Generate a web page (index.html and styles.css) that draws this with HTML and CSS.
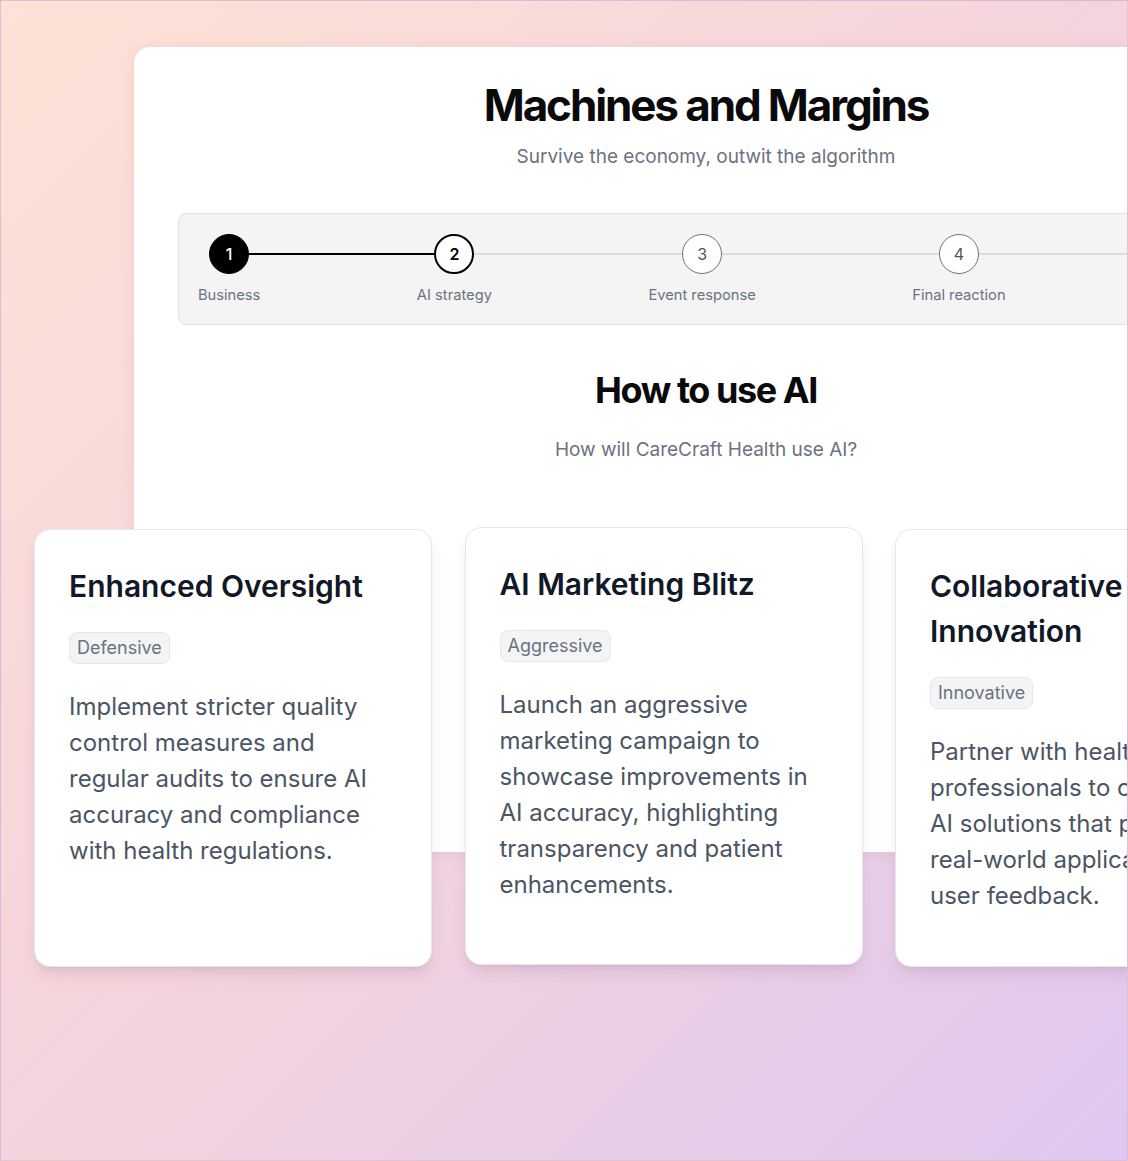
FILE: index.html
```html
<!DOCTYPE html>
<html lang="en">
<head>
<meta charset="utf-8">
<title>Machines and Margins</title>
<link rel="stylesheet" href="styles.css">
</head>
<body>
<div class="page">
  <main class="panel">
    <header class="hero">
      <h1 class="hero-title">Machines and Margins</h1>
      <p class="hero-sub">Survive the economy, outwit the algorithm</p>
    </header>

    <nav class="stepper" aria-label="Progress">
      <div class="track"><div class="progress" style="width:225px"></div></div>
      <ol class="steps">
        <li class="step done"><span class="dot">1</span><span class="step-label">Business</span></li>
        <li class="step current"><span class="dot">2</span><span class="step-label">AI strategy</span></li>
        <li class="step"><span class="dot">3</span><span class="step-label">Event response</span></li>
        <li class="step"><span class="dot">4</span><span class="step-label">Final reaction</span></li>
        <li class="step"><span class="dot">5</span><span class="step-label">Results</span></li>
      </ol>
    </nav>

    <section class="question">
      <h2 class="question-title">How to use AI</h2>
      <p class="question-sub">How will CareCraft Health use AI?</p>
    </section>
  </main>

  <div class="cards">
    <article class="card">
      <h3 class="card-title">Enhanced Oversight</h3>
      <span class="badge">Defensive</span>
      <p class="card-text">Implement stricter quality control measures and regular audits to ensure AI accuracy and compliance with health regulations.</p>
    </article>
    <article class="card raised">
      <h3 class="card-title">AI Marketing Blitz</h3>
      <span class="badge">Aggressive</span>
      <p class="card-text">Launch an aggressive marketing campaign to showcase improvements in AI accuracy, highlighting transparency and patient enhancements.</p>
    </article>
    <article class="card">
      <h3 class="card-title">Collaborative Innovation</h3>
      <span class="badge">Innovative</span>
      <p class="card-text">Partner with health professionals to co-develop AI solutions that prioritize real-world applications and user feedback.</p>
    </article>
  </div>
</div>
</body>
</html>
```

FILE: styles.css
```css
* { box-sizing: border-box; }

html, body {
  margin: 0;
  padding: 0;
}

body {
  font-family: Inter, "Noto Sans", "Liberation Sans", sans-serif;
  color: #0a0a0a;
}

.page {
  width: 1128px;
  height: 1161px;
  overflow: hidden;
  padding: 46px 0 0 33px;
  border: 1px solid rgba(205, 165, 190, 0.45);
  background: linear-gradient(135deg, #fee2d6 0%, #f4d4dc 48%, #dfc8f0 100%);
}

.panel {
  margin-left: 100px;
  width: 1144px;
  background: #ffffff;
  border-radius: 16px;
  padding: 31px 44px 388px;
  box-shadow: 0 2px 14px rgba(180, 120, 130, 0.14);
}

.hero, .question { text-align: center; }

.hero-title {
  margin: 0;
  font-size: 44px;
  line-height: 54px;
  font-weight: 700;
  letter-spacing: -0.048em;
  color: #0a0a0a;
}

.hero-sub {
  margin: 11px 0 0;
  font-size: 19px;
  line-height: 28px;
  color: #6b7280;
}

.stepper {
  position: relative;
  margin-top: 42px;
  background: #f4f4f5;
  border: 1px solid #e2e2e5;
  border-radius: 8px;
  padding: 20px 19px 19px;
}

.track {
  position: absolute;
  top: 39px;
  left: 50px;
  right: 0;
  height: 2px;
  background: #dcdcdf;
}

.progress {
  height: 2px;
  background: #000000;
}

.steps {
  position: relative;
  list-style: none;
  margin: 0;
  padding: 0;
  display: flex;
  gap: 156.5px;
}

.step {
  display: flex;
  flex-direction: column;
  align-items: center;
  gap: 11px;
  flex: none;
}

.dot {
  width: 40px;
  height: 40px;
  border-radius: 50%;
  display: flex;
  align-items: center;
  justify-content: center;
  background: #ffffff;
  border: 1.5px solid #71717a;
  color: #52525b;
  font-size: 16px;
  font-weight: 400;
}

.step.done .dot {
  background: #000000;
  border-color: #000000;
  color: #ffffff;
  font-size: 16px;
  font-weight: 500;
}

.step.current .dot {
  border: 2px solid #000000;
  color: #000000;
  font-weight: 600;
}

.step-label {
  font-size: 14.7px;
  line-height: 20px;
  color: #6b7280;
  white-space: nowrap;
}

.question-title {
  margin: 44px 0 0;
  font-size: 36px;
  line-height: 43px;
  font-weight: 700;
  letter-spacing: -0.04em;
  color: #0a0a0a;
}

.question-sub {
  margin: 24px 0 0;
  font-size: 19px;
  line-height: 28px;
  color: #6b7280;
}

.cards {
  display: flex;
  gap: 32.5px;
  margin-top: -323px;
}

.card {
  flex: none;
  width: 398px;
  height: 438px;
  background: #ffffff;
  border: 1px solid #e5e7eb;
  border-radius: 16px;
  padding: 34px;
  display: flex;
  flex-direction: column;
  align-items: flex-start;
  box-shadow: 0 10px 15px -3px rgba(120, 60, 90, 0.13), 0 4px 6px -4px rgba(120, 60, 90, 0.1);
}

.card.raised { transform: translateY(-2px); }

.card-title {
  margin: 0;
  font-size: 30px;
  line-height: 45px;
  font-weight: 600;
  color: #111827;
}

.badge {
  margin-top: 23px;
  display: inline-block;
  padding: 1px 7px 2px;
  font-size: 18px;
  line-height: 27px;
  color: #6b7280;
  background: #f3f4f6;
  border: 1px solid #e5e7eb;
  border-radius: 8px;
}

.card-text {
  margin: 25px 0 0;
  font-size: 24px;
  line-height: 36px;
  color: #4b5563;
}
```
